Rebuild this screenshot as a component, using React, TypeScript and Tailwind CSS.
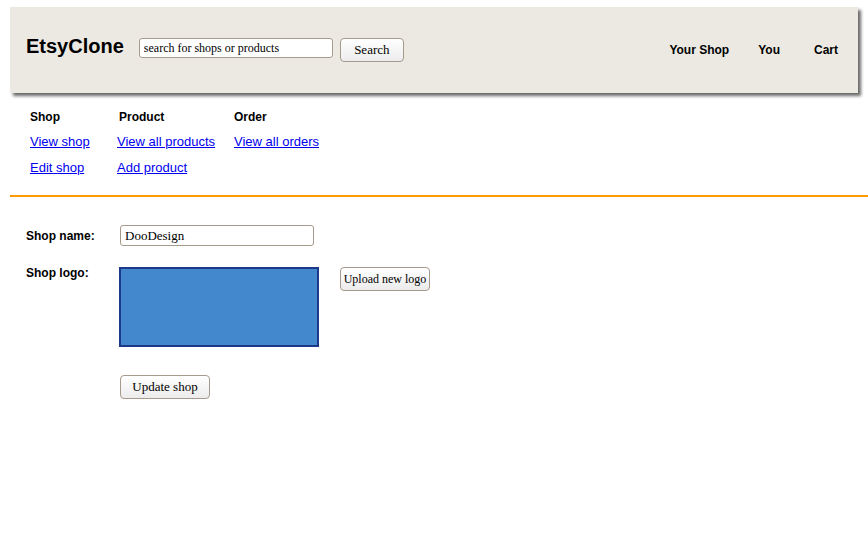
import React from "react";

const sans = { fontFamily: '"Liberation Sans", Arial, sans-serif' };
const serif = { fontFamily: '"Liberation Serif", "Times New Roman", serif' };

function Btn({ children, className = "" }: { children: React.ReactNode; className?: string }) {
  return (
    <button
      className={`flex items-center justify-center whitespace-nowrap rounded-[4px] border border-[#a69a8c] bg-gradient-to-b from-white to-[#ececec] text-black ${className}`}
      style={serif}
    >
      {children}
    </button>
  );
}

export default function App() {
  return (
    <div className="min-h-[543px] w-[868px] bg-white" style={sans}>
      <header className="ml-[10px] mr-[10px] pt-0">
        <div className="mt-[7px] flex h-[86px] items-center bg-[#ece9e3] pl-[16px] pr-[20px] shadow-[3px_3px_3px_#6b6b6b]">
          <div className="mt-[-8px] text-[20px] font-bold text-black">EtsyClone</div>
          <input
            readOnly
            value="search for shops or products"
            className="ml-[15px] mt-[-4px] h-[20px] w-[194px] rounded-[3px] border border-[#a69a8c] bg-white px-[4px] text-[12px] text-black outline-none"
            style={serif}
          />
          <Btn className="ml-[7px] h-[24px] w-[64px] text-[13px]">Search</Btn>
          <nav className="ml-auto flex items-center text-[12px] font-bold text-black">
            <span>Your Shop</span>
            <span className="ml-[29px]">You</span>
            <span className="ml-[34px]">Cart</span>
          </nav>
        </div>
      </header>

      <div className="mt-[15px] grid grid-cols-[87px_117px_auto] pl-[30px] text-[13px]">
        <div className="h-[20px] text-[12px] font-bold text-black">Shop</div>
        <div className="h-[20px] pl-[2px] text-[12px] font-bold text-black">Product</div>
        <div className="h-[20px] text-[12px] font-bold text-black">Order</div>
        <a className="mt-[4px] h-[26px] text-[#0000ee] underline">View shop</a>
        <a className="mt-[4px] h-[26px] text-[#0000ee] underline">View all products</a>
        <a className="mt-[4px] h-[26px] text-[#0000ee] underline">View all orders</a>
        <a className="h-[26px] text-[#0000ee] underline">Edit shop</a>
        <a className="h-[26px] text-[#0000ee] underline">Add product</a>
        <div />
      </div>

      <div className="ml-[10px] mt-[11px] h-[2px] bg-[#ff9900]" />

      <div className="mt-[28px] pl-[26px]">
        <div className="flex items-center">
          <div className="w-[94px] text-[12px] font-bold text-black">Shop name:</div>
          <input
            readOnly
            value="DooDesign"
            className="h-[21px] w-[194px] rounded-[3px] border border-[#a69a8c] bg-white px-[4px] text-[13px] text-black outline-none"
            style={serif}
          />
        </div>
        <div className="mt-[21px] flex items-start">
          <div className="mt-[-3px] w-[93px] text-[12px] font-bold text-black">Shop logo:</div>
          <div className="h-[80px] w-[200px] border-2 border-[#1d3a8a] bg-[#4387cc]" />
          <Btn className="ml-[21px] h-[24px] w-[90px] text-[12px]">Upload new logo</Btn>
        </div>
        <Btn className="ml-[94px] mt-[28px] h-[24px] w-[90px] text-[13px]">Update shop</Btn>
      </div>
    </div>
  );
}
